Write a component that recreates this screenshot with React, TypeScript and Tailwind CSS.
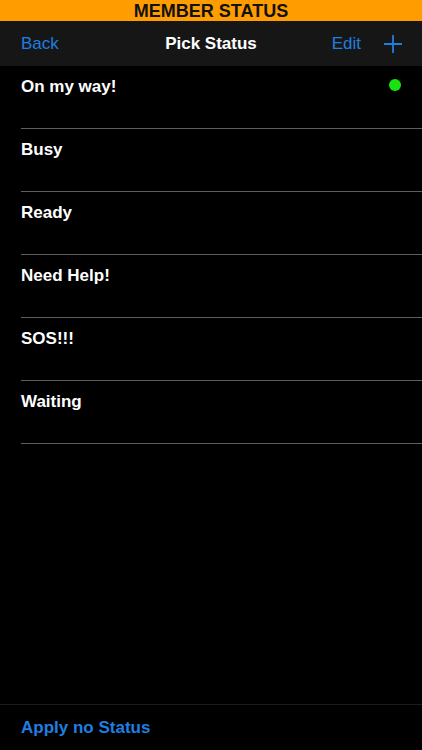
import React from "react";

const statuses = ["On my way!", "Busy", "Ready", "Need Help!", "SOS!!!", "Waiting"];

export default function App() {
  const selected = "On my way!";

  return (
    <div
      className="w-[422px] h-[750px] bg-black flex flex-col overflow-hidden"
      style={{ fontFamily: '"Liberation Sans", Arial, sans-serif' }}
    >
      {/* Top banner */}
      <div className="h-[21px] bg-[#ff9c00] flex items-center justify-center">
        <span className="text-[18px] leading-none font-bold text-[#111]">MEMBER STATUS</span>
      </div>

      {/* Nav bar */}
      <div className="h-[45px] bg-[#161616] flex items-center px-[21px] relative">
        <button className="text-[17px] text-[#1f7ee0]">Back</button>
        <div className="absolute inset-x-0 text-center pointer-events-none">
          <span className="text-[17px] font-bold text-white">Pick Status</span>
        </div>
        <div className="ml-auto flex items-center gap-[22px]">
          <button className="text-[17px] text-[#1f7ee0]">Edit</button>
          <svg width="20" height="20" viewBox="0 0 20 20" className="mr-[-2px]">
            <path d="M10 1v18M1 10h18" stroke="#1f7ee0" strokeWidth="1.8" fill="none" />
          </svg>
        </div>
      </div>

      {/* Status list */}
      <div className="flex-1">
        {statuses.map((s) => (
          <div
            key={s}
            className="ml-[21px] h-[63px] border-b border-[#5e5e5e] pt-[11px] pr-[21px] flex items-start justify-between"
          >
            <span className="text-[17px] leading-[20px] font-bold text-white">{s}</span>
            {s === selected && (
              <span className="mt-[2px] w-[12px] h-[12px] rounded-full bg-[#16e40f]" />
            )}
          </div>
        ))}
      </div>

      {/* Footer */}
      <div className="h-[46px] border-t border-[#1c1c1c] flex items-center px-[21px]">
        <button className="text-[17px] font-bold text-[#1f7ee0]">Apply no Status</button>
      </div>
    </div>
  );
}
